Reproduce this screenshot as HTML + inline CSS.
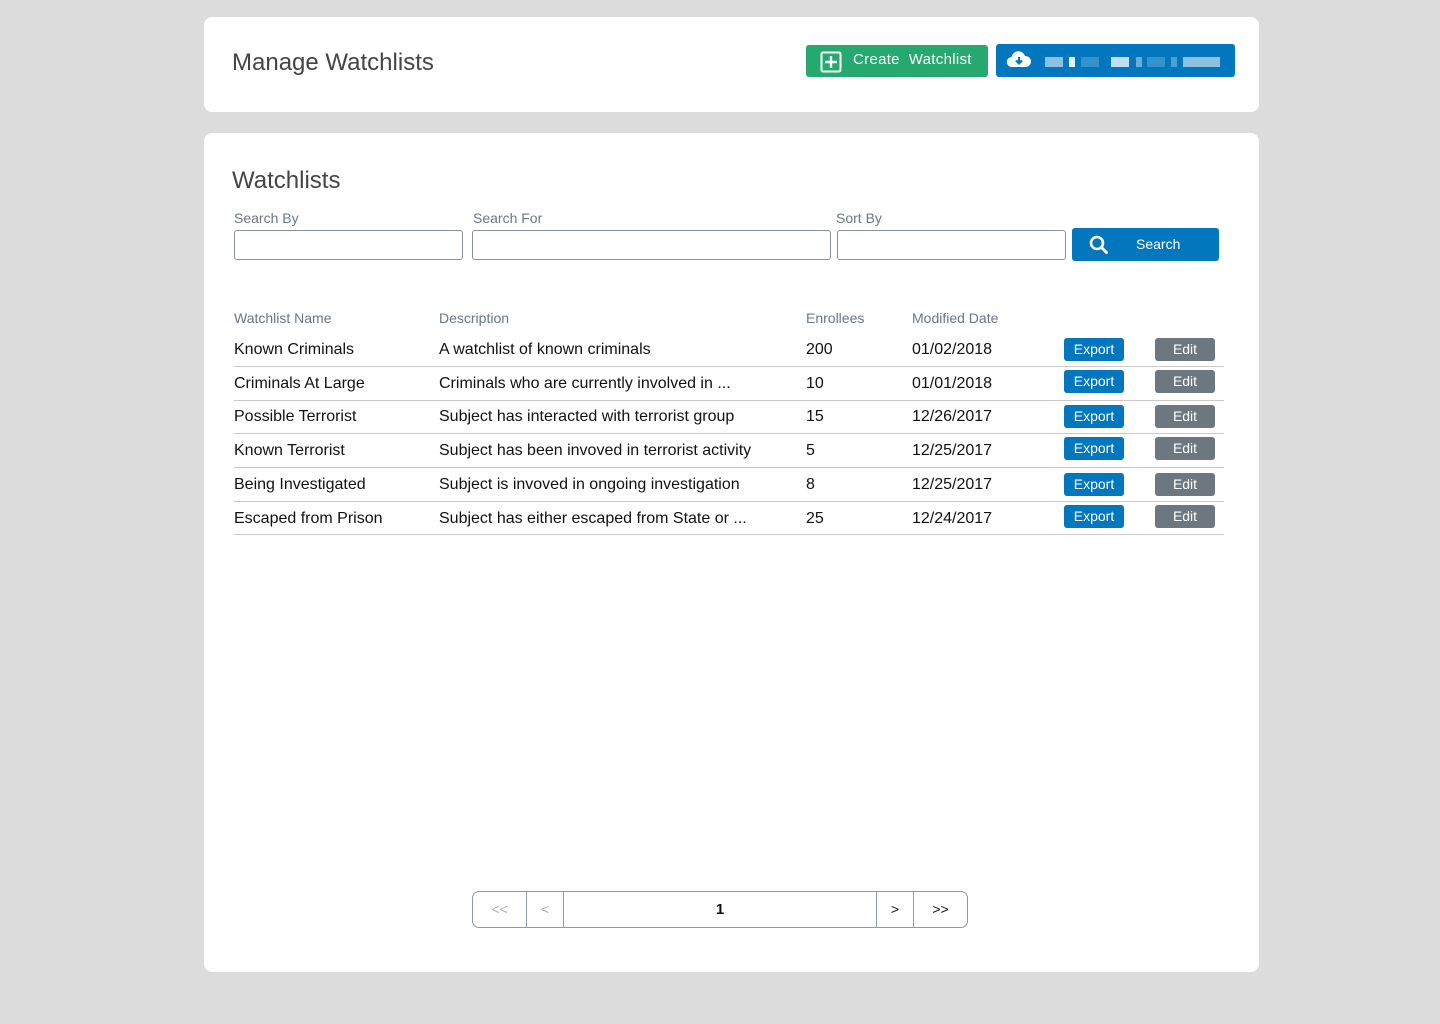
<!DOCTYPE html>
<html><head><meta charset="utf-8"><style>
*{box-sizing:border-box;margin:0;padding:0}
body{width:1440px;height:1024px;background:#dcdcdc;font-family:"Liberation Sans",sans-serif;position:relative;overflow:hidden;color:#111}
.card{position:absolute;background:#fff;border-radius:8px}
.a{position:absolute;white-space:nowrap}
.lbl{font-size:14px;color:#6b7684}
.inp{position:absolute;height:30px;border:1px solid #8a9098;border-radius:3px;top:230px}
.td{font-size:16px;color:#111}
.hr{position:absolute;left:234px;width:990px;height:1px;background:#c9c9c9}
.ex{position:absolute;left:1064px;width:60px;height:23px;background:#0277bd;border-radius:3px;color:#fff;font-size:14px;text-align:center;line-height:23px}
.ed{position:absolute;left:1155px;width:60px;height:23px;background:#6c7780;border-radius:3px;color:#fff;font-size:14px;text-align:center;line-height:23px}
.blk{position:absolute;top:57px;height:10px;background:#fff}
.ttl{font-size:24px;color:#444;font-weight:normal}
</style></head><body>
<div class="card" style="left:204px;top:17px;width:1055px;height:95px"></div>
<div class="a ttl" style="left:232px;top:49px">Manage Watchlists</div>
<div class="a" style="left:806px;top:45px;width:182px;height:32px;background:#25a96f;border-radius:3px"></div>
<svg class="a" style="left:820px;top:51px" width="22" height="22" viewBox="0 0 22 22"><rect x="1.5" y="1.5" width="19" height="19" rx="1.5" fill="none" stroke="#fff" stroke-width="2"/><path d="M11 5v12M5 11h12" stroke="#fff" stroke-width="2.4"/></svg>
<div class="a" style="left:853px;top:51px;font-size:15px;color:#fff;letter-spacing:0.3px">Create&nbsp; Watchlist</div>
<div class="a" style="left:996px;top:44px;width:239px;height:33px;background:#0277bd;border-radius:3px"></div>
<svg class="a" style="left:1006px;top:50px" width="26" height="20" viewBox="0 0 26 20"><path d="M6 17a5 5 0 0 1-.5-10A7 7 0 0 1 19 6a5.5 5.5 0 0 1 1 11z" fill="#fff"/><path d="M13 7v6M10 10.5l3 3 3-3" stroke="#0277bd" stroke-width="2.2" fill="none"/></svg>
<div class="blk" style="left:1045px;width:18px;opacity:.55"></div>
<div class="blk" style="left:1069px;width:6px;opacity:.9"></div>
<div class="blk" style="left:1081px;width:18px;opacity:.2"></div>
<div class="blk" style="left:1111px;width:18px;opacity:.75"></div>
<div class="blk" style="left:1136px;width:6px;opacity:.4"></div>
<div class="blk" style="left:1147px;width:18px;opacity:.2"></div>
<div class="blk" style="left:1171px;width:6px;opacity:.3"></div>
<div class="blk" style="left:1183px;width:37px;opacity:.55"></div>

<div class="card" style="left:204px;top:133px;width:1055px;height:839px"></div>
<div class="a ttl" style="left:232px;top:167px">Watchlists</div>
<div class="a lbl" style="left:234px;top:210px">Search By</div>
<div class="a lbl" style="left:473px;top:210px">Search For</div>
<div class="a lbl" style="left:836px;top:210px">Sort By</div>
<div class="inp" style="left:234px;width:229px"></div>
<div class="inp" style="left:472px;width:359px"></div>
<div class="inp" style="left:837px;width:229px"></div>
<div class="a" style="left:1072px;top:228px;width:147px;height:33px;background:#0277bd;border-radius:3px"></div>
<svg class="a" style="left:1088px;top:234px" width="22" height="22" viewBox="0 0 22 22"><circle cx="9" cy="9" r="6" fill="none" stroke="#fff" stroke-width="2.6"/><path d="M13.5 13.5l5 5" stroke="#fff" stroke-width="3" stroke-linecap="round"/></svg>
<div class="a" style="left:1136px;top:236px;font-size:14px;color:#fff">Search</div>

<div class="a lbl" style="left:234px;top:310px">Watchlist Name</div>
<div class="a lbl" style="left:439px;top:310px">Description</div>
<div class="a lbl" style="left:806px;top:310px">Enrollees</div>
<div class="a lbl" style="left:912px;top:310px">Modified Date</div>

<div class="a td" style="left:234px;top:341px">Known Criminals</div><div class="a td" style="left:439px;top:341px">A watchlist of known criminals</div><div class="a td" style="left:806px;top:341px">200</div><div class="a td" style="left:912px;top:341px">01/02/2018</div><div class="ex" style="top:338px">Export</div><div class="ed" style="top:338px">Edit</div><div class="hr" style="top:366px"></div>
<div class="a td" style="left:234px;top:375px">Criminals At Large</div><div class="a td" style="left:439px;top:375px">Criminals who are currently involved in ...</div><div class="a td" style="left:806px;top:375px">10</div><div class="a td" style="left:912px;top:375px">01/01/2018</div><div class="ex" style="top:370px">Export</div><div class="ed" style="top:370px">Edit</div><div class="hr" style="top:400px"></div>
<div class="a td" style="left:234px;top:408px">Possible Terrorist</div><div class="a td" style="left:439px;top:408px">Subject has interacted with terrorist group</div><div class="a td" style="left:806px;top:408px">15</div><div class="a td" style="left:912px;top:408px">12/26/2017</div><div class="ex" style="top:405px">Export</div><div class="ed" style="top:405px">Edit</div><div class="hr" style="top:433px"></div>
<div class="a td" style="left:234px;top:442px">Known Terrorist</div><div class="a td" style="left:439px;top:442px">Subject has been invoved in terrorist activity</div><div class="a td" style="left:806px;top:442px">5</div><div class="a td" style="left:912px;top:442px">12/25/2017</div><div class="ex" style="top:437px">Export</div><div class="ed" style="top:437px">Edit</div><div class="hr" style="top:467px"></div>
<div class="a td" style="left:234px;top:476px">Being Investigated</div><div class="a td" style="left:439px;top:476px">Subject is invoved in ongoing investigation</div><div class="a td" style="left:806px;top:476px">8</div><div class="a td" style="left:912px;top:476px">12/25/2017</div><div class="ex" style="top:473px">Export</div><div class="ed" style="top:473px">Edit</div><div class="hr" style="top:501px"></div>
<div class="a td" style="left:234px;top:510px">Escaped from Prison</div><div class="a td" style="left:439px;top:510px">Subject has either escaped from State or ...</div><div class="a td" style="left:806px;top:510px">25</div><div class="a td" style="left:912px;top:510px">12/24/2017</div><div class="ex" style="top:505px">Export</div><div class="ed" style="top:505px">Edit</div><div class="hr" style="top:534px"></div>

<div class="a" style="left:472px;top:891px;width:496px;height:37px;border:1px solid #8a9aa6;border-radius:7px;display:flex;font-size:14px">
<div style="width:54px;border-right:1px solid #8a9aa6;text-align:center;line-height:35px;color:#aab">&lt;&lt;</div>
<div style="width:37px;border-right:1px solid #8a9aa6;text-align:center;line-height:35px;color:#aab">&lt;</div>
<div style="width:313px;border-right:1px solid #8a9aa6;text-align:center;line-height:35px;font-weight:bold;font-size:15px">1</div>
<div style="width:37px;border-right:1px solid #8a9aa6;text-align:center;line-height:35px">&gt;</div>
<div style="flex:1;text-align:center;line-height:35px">&gt;&gt;</div>
</div>
</body></html>
